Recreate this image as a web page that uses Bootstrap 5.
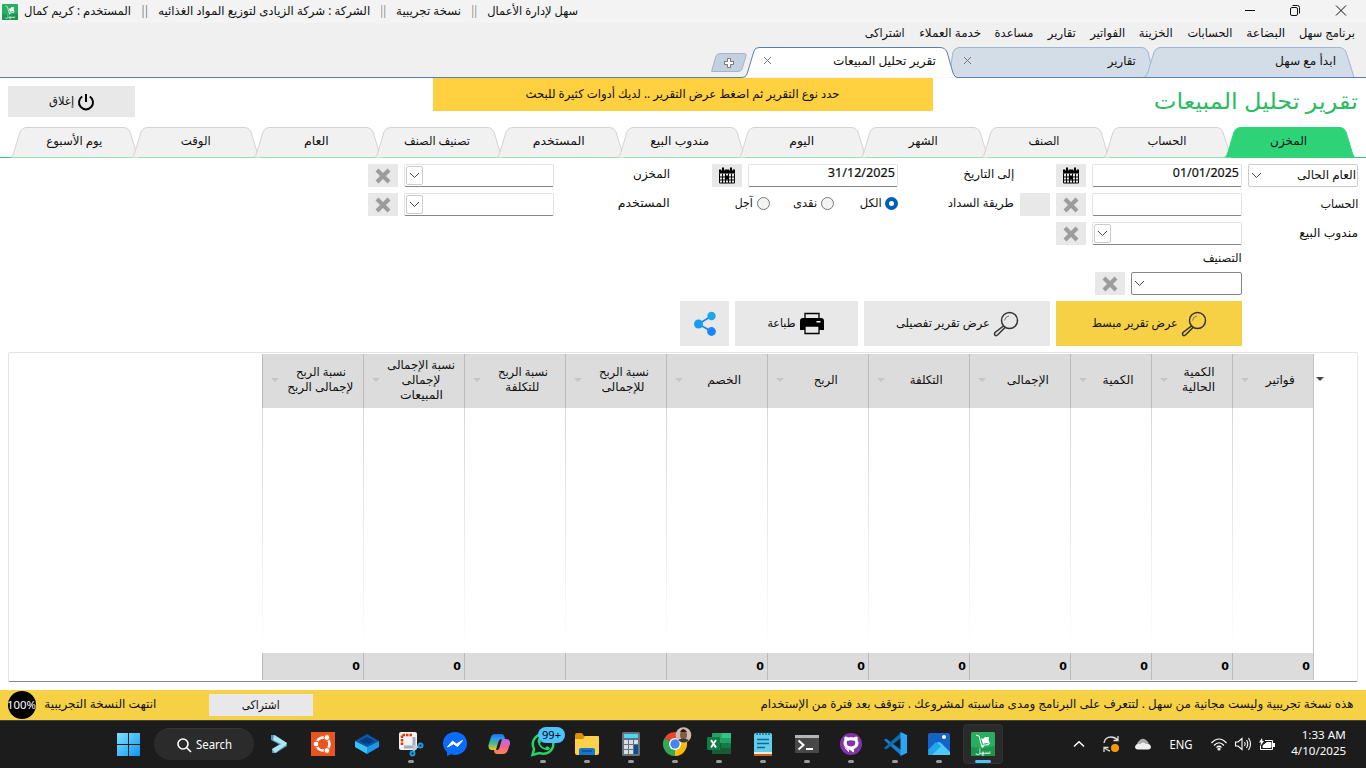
<!DOCTYPE html>
<html lang="ar">
<head>
<meta charset="utf-8">
<meta name="viewport" content="width=device-width, initial-scale=1">
<title>سهل لإدارة الأعمال</title>
<link rel="stylesheet" href="https://cdn.jsdelivr.net/npm/bootstrap@5.3.0/dist/css/bootstrap.min.css">
<script src="https://cdn.jsdelivr.net/npm/bootstrap@5.3.0/dist/js/bootstrap.bundle.min.js"></script>
<style>
body{width:1366px;height:768px;overflow:hidden;background:#fff;color:#111;font:12px/15px "Noto Sans","DejaVu Sans",sans-serif}
svg{display:block;overflow:visible;flex:none}
.rtl{direction:rtl}
.fit{display:inline-block;direction:rtl;white-space:nowrap;flex:none}
.fit>span{display:inline-block;transform-origin:100% 50%;--dy:-1px}
.fit.up>span{--dy:-2px}
.fit.level>span{--dy:0px}
.titlebar{height:23px;background:#f3f3f3;padding:0 20px 0 2px;gap:10px}
.menubar{height:24px;background:#f0f0f0;padding:0 11px 3px 0;gap:14px}
.strip{height:31px;background:#f0f0f0}
.strip .shape{position:absolute;left:0;top:0}
.strip .cells{position:relative;height:28px;padding-right:30px}
.pagehead{height:49px;padding:0 8px}
.banner{width:500px;height:33px;background:#ffd040;margin-left:298px}
.graybtn{background:#e8e8e8;border:0;border-radius:0;padding:0;color:#111;font-size:12px;line-height:15px;display:flex;align-items:center;justify-content:center}
.goldbtn{background:#f7d145}
.exit{width:127px;height:31px;margin-top:8px;gap:4px}
.heading{margin-left:221px;margin-top:8px;font-size:22px;line-height:30px;color:#2dbb64}
.rtabs{height:31px;border-bottom:1px solid #36cc78;padding-left:14px}
.rtab{width:121.4px;height:30px;position:relative;display:flex;justify-content:center;align-items:center}
.rtab svg{position:absolute;left:-3px;top:0}
.rtab .fit{position:relative;top:-1px}
.rtab.mid{padding-right:3px}
.rtab path{fill:#f1f1f1;stroke:#d3d3d3}
.rtab.on path{fill:#2fd377;stroke:#2fd377}
.filters{padding:6px 8px;gap:6px;height:194px}
.frow{height:23px;gap:6px}
.frow>*{flex:none}
.lab{width:110px}.lab2{width:146px;padding-right:36px}
.box{width:150px;height:23px;border:1px solid #e3e3e3;border-bottom-color:#868686;border-radius:2px;background:#fff;padding:0 3px}
.box .dt{margin-right:-1px;margin-top:1px;-webkit-text-stroke:.2px #111}
.drop{width:17px;height:19px;border:1px solid #ccc;border-radius:2px;margin-right:auto;margin-left:-2px;display:flex;align-items:center;justify-content:center}
.ico{width:30px;height:23px}
.radio{width:13px;height:13px;border:1px solid #777;border-radius:50%;background:#f3f3f3}
.radio.on{border:4px solid #0060b8;background:#fff}
.actions{gap:6px}
.actions .graybtn{height:45px;gap:4px}
.frame{margin:0 8px;height:330px;border:1px solid #e4e4e4;border-bottom-color:#888;border-radius:2px;padding-top:1px}
.cols{width:1052px;height:326px;margin-left:253px;border-right:1px solid #c2c2c2}
.colx{width:101px;display:flex;flex-direction:column;height:326px}
.colx.narrow{width:81px}
.hd{height:54px;background:#dcdcdc;border-left:1px solid #bbb;padding:0 1px 2px 8px}
.hd .caret,.pick{width:0;height:0;border:4px solid transparent;border-top-color:#c5c5c5;border-bottom:0;flex:none}
.bd{height:245px;background:linear-gradient(#d9d9d9,#e6e6e6 40%,#fff) left/1px 100% no-repeat}
.ft{height:27px;background:#dcdcdc;border-left:1px solid #bbb;text-align:right;padding-right:3px;font:bold 11px/27px "DejaVu Sans",sans-serif;color:#000}
.rest{width:44px}
.pick{border-top-color:#444;margin:23px 0 0 2px}
.trial{height:30px;background:#f7d145;margin-top:8px;padding:0 13px 0 8px}
.pct{width:28px;height:28px;border-radius:50%;background:#000;color:#fff;font-size:11px;overflow:hidden;justify-content:center}
.taskbar{height:48px;background:#1c1c1c;border-top:1px solid #444;color:#fff;padding-bottom:1px}
.pill{width:100px;height:32px;border-radius:16px;background:#2b2b2b;border-top:1px solid #363636;margin-left:14px;margin-right:13px}
.apps{gap:20px}
.app{width:24px;height:24px;position:relative}
.app.run::after{content:"";position:absolute;left:9px;top:28px;width:6px;height:3px;border-radius:2px;background:#9a9a9a}
.app.cur::before{content:"";position:absolute;left:-8px;top:-8px;width:40px;height:40px;border-radius:4px;background:#2a2a2a;border:1px solid #333}
.app.run.cur::after{left:4px;width:16px;background:#4cc2ff}
.app svg{position:relative}
.count{position:absolute;left:7px;top:-5px;width:27px;height:16px;border-radius:8px;background:#4cc2ff;color:#000;font-size:11px;line-height:15px;text-align:center;z-index:2}
.clock{text-align:right;font-size:11px;line-height:16px;width:60px}
</style>
</head>
<body>
<svg width="0" height="0" style="position:absolute"><defs>
<g id="x"><path d="M2 2L14 14M14 2L2 14" stroke="#9c9c9c" stroke-width="4.2"/></g>
<g id="v"><path d="M0 0L4.5 4.5L9 0" fill="none" stroke="#444"/></g>
<g id="cal" transform="translate(0 -.5)"><path d="M0 2H16V6H0ZM3 0h2v3H3ZM11 0h2v3h-2Z"/><path d="M.5 6V15.500H15.500V6M0 9.500H16M0 12.500H16M3.500 6V15.500M6.500 6V15.500M9.500 6V15.500M12.500 6V15.500" fill="none" stroke="#000"/><path d="M7 8h3v4H7Z"/><path d="M2.500 .5v2.500M5.500 .5v2.500M10.500 .5v2.500M13.500 .5v2.500" stroke="#ddd" stroke-width=".8"/></g>
<g id="mag" fill="none" stroke="#333" stroke-width="1.500"><circle cx="15.500" cy="8.500" r="8"/><path d="M9.500 14L11 15.500L3.500 23Q2 24.200 .8 23Q0 22 1 20.500Z"/><path d="M10.500 8.500Q11 4.500 15 4" stroke-width="1" stroke="#777"/></g>
<g id="sahl"><rect width="24" height="24" rx="1.500" fill="#27ae60"/><path d="M0 15Q12 17 24 14V24H0Z" fill="#1f9450"/><path d="M5 3L8 4L10.500 13.500L18 12.500" fill="none" stroke="#fff"/><path d="M10 6L12 7L14 5L18 5L17.500 8L19 12L15 11L12 12Z" fill="#fff"/><circle cx="11.500" cy="14.500" r="1.200" fill="#fff"/><text x="12" y="21.500" text-anchor="middle" font-size="7.500" fill="#d8f5e2">سهل</text></g>
</defs></svg>

<header class="titlebar d-flex align-items-center">
  <svg width="16" height="16" viewBox="0 0 24 24"><use href="#sahl"/></svg>
  <span class="fit" style="margin-left:-4px" data-w="107">المستخدم : كريم كمال</span>
  <span class="fit" data-w="7">||</span>
  <span class="fit" data-w="212">الشركة : شركة الزيادى لتوزيع المواد الغذائيه</span>
  <span class="fit" data-w="6">||</span>
  <span class="fit" data-w="65">نسخة تجريبية</span>
  <span class="fit" data-w="6">||</span>
  <span class="fit" data-w="91">سهل لإدارة الأعمال</span>
  <svg class="ms-auto" width="101" height="11" viewBox="0 0 101 11" fill="none" stroke="#111" style="margin-top:-2px"><path d="M0 5.500H10M91 .5L101 10.500M101 .5L91 10.500"/><rect x="45.500" y="2.500" width="7" height="8" rx="1.500"/><path d="M47.500 .5H52.500Q54.500 .5 54.500 2.500V8.500"/></svg>
</header>
<nav class="menubar d-flex align-items-center rtl">
  <span class="fit" data-w="56">برنامج سهل</span><span class="fit" data-w="39">البضاعة</span><span class="fit" data-w="45">الحسابات</span><span class="fit" data-w="34">الخزينة</span><span class="fit" data-w="35">الفواتير</span><span class="fit" data-w="28">تقارير</span><span class="fit" data-w="39">مساعدة</span><span class="fit" data-w="62">خدمة العملاء</span><span class="fit" data-w="40">اشتراكى</span>
</nav>
<div class="strip position-relative">
  <svg class="shape" width="1366" height="31" viewBox="0 0 1366 31">
    <path d="M949 30.500L953 5Q955 .5 959 .5H1141Q1146 .5 1148 5L1154 30" fill="#d2dde8" stroke="#9db7d2"/>
    <path d="M1144 30.500Q1147 29 1148 25L1154 5Q1156 .5 1160 .5H1339Q1344 .5 1346 5L1354 30" fill="#d2dde8" stroke="#9db7d2"/>
    <path d="M0 30.500H742Q746 30.500 747 27L754 4Q755 .5 759 .5H940Q945 .5 947 5L953 26Q955 30.500 957 30.500H1366" fill="#fff" stroke="#5b7fa8"/>
    <path d="M711.500 24.500L716 9Q717 6.500 720 6.500H744Q747 6.500 746 9L742 22Q741 24.500 738 24.500Z" fill="#c3d0dd" stroke="#9fb6cc"/>
    <path d="M727.500 11.500h3v3h3v3h-3v3h-3v-3h-3v-3h3Z" fill="#fff" stroke="#777"/>
    <path d="M764 10l7 7M771 10l-7 7M964 10l7 7M971 10l-7 7" stroke="#777"/>
  </svg>
  <div class="cells d-flex align-items-center rtl">
    <span class="fit" data-w="61">ابدأ مع سهل</span><span class="fit" style="margin-right:139px" data-w="28">تقارير</span><span class="fit" style="margin-right:172px" data-w="103">تقرير تحليل المبيعات</span>
  </div>
</div>

<div class="pagehead d-flex">
  <button class="graybtn exit" type="button"><span class="fit" data-w="25">إغلاق</span>
    <svg width="16" height="16" viewBox="0 0 16 16" fill="none" stroke="#000" stroke-width="2"><path d="M4.200 2.500A7 7 0 1 0 11.800 2.500M8 0V8"/></svg></button>
  <div class="banner d-flex align-items-center justify-content-center"><span class="fit" data-w="314">حدد نوع التقرير ثم اضغط عرض التقرير .. لديك أدوات كثيرة للبحث</span></div>
  <div class="heading"><span class="fit" data-w="204">تقرير تحليل المبيعات</span></div>
</div>

<nav class="rtabs d-flex" id="rtabs"></nav>

<section class="filters d-flex flex-column rtl">
  <div class="frow d-flex align-items-center">
    <div class="box d-flex align-items-center" style="width:110px;border-color:#ccc;padding-right:1px"><span class="fit" data-w="59">العام الحالى</span><svg class="me-auto" width="9" height="5"><use href="#v"/></svg></div>
    <div class="box"><span class="fit dt" data-w="66">01/01/2025</span></div>
    <button class="graybtn ico" type="button"><svg width="16" height="16"><use href="#cal"/></svg></button>
    <div class="ico"></div>
    <div class="lab"><span class="fit up" data-w="51">إلى التاريخ</span></div>
    <div class="box"><span class="fit dt" data-w="67">31/12/2025</span></div>
    <button class="graybtn ico" type="button"><svg width="16" height="16"><use href="#cal"/></svg></button>
    <div class="lab2"><span class="fit up" data-w="37">المخزن</span></div>
    <div class="box d-flex align-items-center"><span class="drop"><svg width="9" height="5"><use href="#v"/></svg></span></div>
    <button class="graybtn ico" type="button"><svg width="16" height="16"><use href="#x"/></svg></button>
  </div>
  <div class="frow d-flex align-items-center">
    <div class="lab"><span class="fit" data-w="38">الحساب</span></div>
    <div class="box"></div>
    <button class="graybtn ico" type="button"><svg width="16" height="16"><use href="#x"/></svg></button>
    <button class="graybtn ico" type="button"></button>
    <div class="lab"><span class="fit up" data-w="66">طريقة السداد</span></div>
    <div class="d-flex align-items-center" style="width:186px;margin-top:-2px"><i class="radio on"></i><span class="fit" style="margin-right:3px" data-w="22">الكل</span><i class="radio" style="margin-right:26px"></i><span class="fit" style="margin-right:4px" data-w="24">نقدى</span><i class="radio" style="margin-right:23px"></i><span class="fit" style="margin-right:4px" data-w="18">آجل</span></div>
    <div class="lab2"><span class="fit up" data-w="52">المستخدم</span></div>
    <div class="box d-flex align-items-center"><span class="drop"><svg width="9" height="5"><use href="#v"/></svg></span></div>
    <button class="graybtn ico" type="button"><svg width="16" height="16"><use href="#x"/></svg></button>
  </div>
  <div class="frow d-flex align-items-center">
    <div class="lab"><span class="fit" data-w="59">مندوب البيع</span></div>
    <div class="box d-flex align-items-center"><span class="drop"><svg width="9" height="5"><use href="#v"/></svg></span></div>
    <button class="graybtn ico" type="button"><svg width="16" height="16"><use href="#x"/></svg></button>
  </div>
  <div style="height:15px;padding-right:116px"><span class="fit" data-w="39">التصنيف</span></div>
  <div class="frow d-flex align-items-center" style="padding-right:116px">
    <div class="box d-flex align-items-center" style="width:111px;border-color:#868686"><svg class="me-auto" width="9" height="5"><use href="#v"/></svg></div>
    <button class="graybtn ico" type="button"><svg width="16" height="16"><use href="#x"/></svg></button>
  </div>
  <div class="actions d-flex" style="padding-right:116px">
    <button class="graybtn goldbtn" style="width:186px" type="button"><svg width="24" height="24"><use href="#mag"/></svg><span class="fit" data-w="86">عرض تقرير مبسط</span></button>
    <button class="graybtn" style="width:186px;padding-left:2px;padding-right:3px" type="button"><svg width="24" height="24"><use href="#mag"/></svg><span class="fit" data-w="94">عرض تقرير تفصيلى</span></button>
    <button class="graybtn" style="width:123px;padding-right:2px" type="button"><svg width="24" height="24" viewBox="0 0 24 24"><path d="M3 6H21Q24 6 24 9V18H0V9Q0 6 3 6Z"/><path d="M5 6V1.500H19V6M5 14V21.500H19V14Z" fill="#e8e8e8" stroke="#000" stroke-width="1.300"/><rect x="16.500" y="9" width="4" height="1.500" fill="#fff"/></svg><span class="fit" data-w="28">طباعة</span></button>
    <button class="graybtn" style="width:49px" type="button"><svg width="22" height="24" viewBox="0 0 22 24"><path d="M17.500 4L4.500 12L17.500 19.500" fill="none" stroke="#1a7df0" stroke-width="1.500"/><circle cx="17.500" cy="4" r="4.200" fill="#1ca8e8"/><circle cx="4.500" cy="12" r="4.500" fill="#1b9cf2"/><circle cx="17.500" cy="19.500" r="4.400" fill="#1a85ff"/></svg></button>
  </div>
</section>

<main class="frame d-flex">
  <div class="cols d-flex" id="cols"></div>
  <div class="rest"><div class="pick"></div></div>
</main>

<div class="trial d-flex align-items-center">
  <div class="pct d-flex align-items-center"><span class="fit" data-w="29">100%</span></div>
  <span class="fit up" style="margin-left:8px" data-w="112">انتهت النسخة التجريبية</span>
  <button class="graybtn" style="width:104px;height:22px;margin-left:53px" type="button"><span class="fit" data-w="38">اشتراكى</span></button>
  <span class="fit up ms-auto" data-w="593">هذه نسخة تجريبية وليست مجانية من سهل . لتتعرف على البرنامج ومدى مناسبته لمشروعك . تتوقف بعد فترة من الإستخدام</span>
</div>

<footer class="taskbar d-flex align-items-center">
  <svg style="margin-left:117px" width="23" height="23" viewBox="0 0 23 23"><defs><linearGradient id="w" x2="1" y2="1"><stop stop-color="#7de3fb"/><stop offset="1" stop-color="#1095f5"/></linearGradient></defs><path d="M0 0H11V11H0ZM12 0H23V11H12ZM0 12H11V23H0ZM12 12H23V23H12Z" fill="url(#w)"/></svg>
  <div class="pill d-flex align-items-center"><svg style="margin-left:23px" width="14" height="14" fill="none" stroke="#fff" stroke-width="1.600"><circle cx="6" cy="6" r="5"/><path d="M9.500 9.500L14 14"/></svg><span class="fit level" style="margin-left:5px" data-w="36">Search</span></div>
  <div class="apps d-flex">
    <div class="app"><svg width="24" height="24"><path d="M4 3L8 3L20 11V14L9 21H5V17L12 12.500L4 8Z" fill="#5d91aa"/><path d="M7 3L20 11L18 14L6 8ZM5 17L14 12L19 13L8 21Z" fill="#a9e6f2"/></svg></div>
    <div class="app"><svg width="24" height="24"><rect width="24" height="24" fill="#e95420"/><circle cx="12" cy="12" r="6.500" fill="none" stroke="#fff" stroke-width="2.500"/><g fill="#fff" stroke="#e95420"><circle cx="16" cy="5.500" r="2.900"/><circle cx="5" cy="12" r="2.900"/><circle cx="16" cy="18.500" r="2.900"/></g></svg></div>
    <div class="app"><svg width="24" height="24"><path d="M0 9L12 2L24 9L12 15Z" fill="#0b58a8"/><path d="M4 9L12 5L20 9L12 13Z" fill="#063a80"/><path d="M0 9L12 15V22L0 15Z" fill="#35c3fb"/><path d="M24 9L12 15V22L24 15Z" fill="#1b96e8"/></svg></div>
    <div class="app run"><svg width="24" height="24"><rect width="18" height="18" rx="2" fill="#f1f1f1"/><path d="M3 13V3H14" fill="none" stroke="#d83b01" stroke-width="2.500" stroke-dasharray="2.500 1"/><path d="M15 5V15H5" fill="none" stroke="#aab" stroke-width="3"/><path d="M15 13V19M15 15H20" stroke="#bcd" stroke-width="2"/><g fill="none" stroke="#1a9be0" stroke-width="2"><circle cx="13.500" cy="21.500" r="2"/><circle cx="21.500" cy="13.500" r="2"/></g></svg></div>
    <div class="app"><svg width="24" height="24"><path d="M12 0C5 0 0 5 0 11.500C0 15 1.500 18 4 20V24L8 22.300C16 25 24 19.500 24 11.500C24 5 19 0 12 0Z" fill="#0a6cff"/><path d="M4.500 15L9.500 9L13.500 12L19.500 8.500L14.500 14.500L10.500 11.800Z" fill="#fff" stroke="#fff"/></svg></div>
    <div class="app"><svg width="24" height="24"><defs><linearGradient id="c1" x2="0" y2="1"><stop stop-color="#1f6fe0"/><stop offset=".3" stop-color="#2a9af0"/><stop offset=".6" stop-color="#4dbb84"/><stop offset="1" stop-color="#f0c520"/></linearGradient><linearGradient id="c2" x2="0" y2="1"><stop stop-color="#b36bf0"/><stop offset=".5" stop-color="#f0629a"/><stop offset="1" stop-color="#f98848"/></linearGradient></defs><path d="M8 2H15Q17 2 18 7H15Q12 7 11 11L9 18H5Q1 18 1.500 13L4 5Q5 2 8 2Z" fill="url(#c1)"/><path d="M16 22H10Q7 22 7 18H10Q12 18 13 14L15 7H19Q23.500 7 23 12L20.500 19Q19 22 16 22Z" fill="url(#c2)"/></svg></div>
    <div class="app run"><svg width="24" height="24"><path d="M1.500 23L3 17Q0 11 4 6Q9 0 17 3Q24 7 22 15Q18 24 8 21Z" fill="none" stroke="#25d366" stroke-width="2.500"/><path d="M8 6L10 10L9 12Q11 15 14 16L16 14L19 16Q18 19 15 18Q8 17 6.500 9Q6.500 7 8 6Z" fill="#25d366"/></svg><span class="count">99+</span></div>
    <div class="app run"><svg width="24" height="24"><path d="M0 3Q0 1 2 1H7L9 4H24V8H0Z" fill="#d99100"/><path d="M0 7H8L10 4H22Q24 4 24 6V21Q24 23 22 23H2Q0 23 0 21Z" fill="#ffd04c"/><path d="M4 23V18Q4 16 6 16H18Q20 16 20 18V23Z" fill="#1478c8"/><path d="M7 19H17" stroke="#0a4f93" stroke-width="1.500"/></svg></div>
    <div class="app run"><svg width="24" height="24"><rect x="3" width="18" height="24" rx="1.500" fill="#65717c"/><rect x="5" y="2" width="14" height="4" fill="#4ed4f5"/><path d="M5 8h4v4H5zM10 8h4v4h-4zM15 8h4v4h-4zM5 13h4v4H5zM10 13h4v4h-4zM5 18h4v4H5zM10 18h4v4h-4z" fill="#d7dde2"/><path d="M15 13h4v9h-4z" fill="#0c4f8c"/></svg></div>
    <div class="app run"><svg width="24" height="24"><path d="M12 12L1.600 6A12 12 0 0 1 22.400 6Z" fill="#ea4335"/><path d="M12 12L22.400 6A12 12 0 0 1 12 24Z" fill="#fbbc04"/><path d="M12 12L12 24A12 12 0 0 1 1.600 6Z" fill="#34a853"/><circle cx="12" cy="12" r="6" fill="#fff"/><circle cx="12" cy="12" r="4.700" fill="#4285f4"/><circle cx="20.500" cy="3" r="7.800" fill="#cdbcae"/><ellipse cx="20.500" cy="3" rx="3.500" ry="5" fill="#835a43"/><path d="M17 0Q20-6 24 0Z" fill="#241a17"/><path d="M15 8Q20 5 26 8Q21 13 15 8Z" fill="#33363b"/></svg></div>
    <div class="app run"><svg width="24" height="24"><rect x="5" y="1" width="19" height="21" rx="1" fill="#21a366"/><path d="M14.500 1H24V6H14.500Z" fill="#33c481"/><path d="M5 11H14V22H5ZM14 16H24V22H14Z" fill="#185c37"/><path d="M14 11H24V16H14Z" fill="#107c41"/><rect y="5" width="13" height="13" rx="1" fill="#107c41"/><path d="M4 8L9 15.500M9 8L4 15.500" stroke="#fff" stroke-width="1.900"/></svg></div>
    <div class="app run"><svg width="24" height="24"><rect x="3" y="1" width="18" height="23" rx="1.500" fill="#63cdeb"/><path d="M3 20H21V22H3Z" fill="#f5e9dc"/><path d="M3 22H21V24H3Z" fill="#c8621b"/><path d="M6 7.500H18M6 11.500H18M6 15.500H14" stroke="#096a96" stroke-width="1.500"/><path d="M6 0V3M9 0V3M12 0V3M15 0V3M18 0V3" stroke="#0c5372" stroke-width="1.200"/></svg></div>
    <div class="app run"><svg width="24" height="24"><rect y="3" width="24" height="18" rx="1" fill="#484848"/><path d="M0 3H24V6H0Z" fill="#b5b5b5"/><path d="M3.500 8.500L8.500 13L3.500 17.500M11 17H18" fill="none" stroke="#fff" stroke-width="2"/></svg></div>
    <div class="app run"><svg width="24" height="24"><circle cx="12" cy="12" r="11" fill="#8534a8"/><path d="M9.500 20V17.500Q7 18 6 15.500M9.500 16.500Q5 15.500 5 11Q5 9.500 6 8Q5.500 6.500 6 5Q8 5 9 6Q12 5.300 15 6Q16 5 18 5Q18.500 6.500 18 8Q19 9.500 19 11Q19 15.500 14.500 16.500V20Z" fill="#fff" stroke="#fff"/><path d="M8 9Q12 7.500 16 9Q17.500 14 12 14.500Q6.500 14 8 9Z" fill="#8534a8"/></svg></div>
    <div class="app run"><svg width="24" height="24"><path d="M1 8L3 6.500L18 18V23.500Z" fill="#1482c8"/><path d="M1 16L3 17.500L18 6V.5Z" fill="#0d6bb0"/><path d="M17.500 0L24 3V21L17.500 24Z" fill="#2ba5f5"/></svg></div>
    <div class="app run"><svg width="24" height="24"><rect x="1" y="1" width="22" height="22" rx="2" fill="#1464c8"/><path d="M1 22L10 11Q12 9 14 11L23 20V23H2Z" fill="#4cc9f8"/><path d="M1 18L9 10L14 14L5 23H2Z" fill="#20a6ea"/><circle cx="17" cy="5" r="2" fill="#fff"/></svg></div>
    <div class="app run cur"><svg width="24" height="24"><use href="#sahl"/></svg></div>
  </div>
  <svg style="margin-left:79px" width="10" height="6" fill="none" stroke="#fff" stroke-width="1.500"><path d="M0 5.500L5 .7L10 5.500"/></svg>
  <svg style="margin-left:19px" width="16" height="16" fill="none" stroke="#ddd" stroke-width="1.300"><path d="M1 7Q2 1 8 1Q12 1 14.500 4M15 0V4.500H10.500M7 15Q3 14 1.500 11.500M1 16V11.500H5.500"/><circle cx="12" cy="12" r="4" fill="#ff9800" stroke="none"/></svg>
  <svg style="margin-left:16px" width="16" height="12"><path d="M3 8Q1 5 4 3Q7-1 11 2L14 5L8 10Z" fill="#aaa"/><path d="M3 11.500Q0 11.500 0 8.500Q1 5 5 6Q8 3 11 6Q15 5 16 8.500Q16 11.500 13 11.500Z" fill="#eee"/></svg>
  <span class="fit level" style="margin-left:19px" data-w="23">ENG</span>
  <svg style="margin-left:18px" width="16" height="13" fill="none" stroke="#fff" stroke-width="1.200"><path d="M.5 5Q8-3 15.500 5M3 7.500Q8 2 13 7.500M5.500 9.500Q8 7 10.500 9.500"/><circle cx="8" cy="11" r="1"/></svg>
  <svg style="margin-left:8px" width="16" height="14" fill="none" stroke="#fff" stroke-width="1.100"><path d="M.5 5V9H3L7 12.500V1.500L3 5ZM9.500 5Q11 7 9.500 9M11.500 3Q14 7 11.500 11M13.500 1Q17.500 7 13.500 13"/></svg>
  <svg style="margin-left:8px" width="16" height="13" fill="none" stroke="#fff"><path d="M6 2.500H13.500V11.500H1.500V7.500"/><path d="M8 4.500H12V9.500H4V7.500Z" fill="#fff"/><path d="M15 5V9" stroke-width="2"/><path d="M3 0L0 4.500H2L1.500 8L5 3H3.500Z" fill="#fff" stroke="none"/></svg>
  <div class="clock" style="margin-left:11px"><span class="fit lat" data-w="44">1:33 AM</span><br><span class="fit" data-w="55">4/10/2025</span></div>
</footer>

<script>
const tabs=[["يوم الأسبوع",56],["الوقت",30],["العام",25],["تصنيف الصنف",66],["المستخدم",52],["مندوب البيع",59],["اليوم",25],["الشهر",29],["الصنف",31],["الحساب",39],["المخزن",37]];
document.getElementById("rtabs").innerHTML=tabs.map(([t,w],i)=>
`<div class="rtab${i==10?" on":i>1&&i<9?" mid":""}"><svg width="131" height="31"><path d="M0 30.500Q2 29 3 25L9 5Q11 .5 16 .5H${i==10?115:112}Q${i==10?119:117} .5 ${i==10?121:119} 5L${i==10?128:126} 28L${i==10?130:127} 30.500"/></svg><span class="fit" data-w="${w}">${t}</span></div>`).join("");
const cols=[[[["نسبة الربح",50],["لإجمالى الربح",66]],"0"],[[["نسبة الإجمالى",68],["لإجمالى",39],["المبيعات",43]],"0"],[[["نسبة الربح",50],["للتكلفة",34]],""],[[["نسبة الربح",50],["للإجمالى",43]],""],[[["الخصم",34]],"0"],[[["الربح",24]],"0"],[[["التكلفة",33]],"0"],[[["الإجمالى",42]],"0"],[[["الكمية",31]],"0"],[[["الكمية",31],["الحالية",33]],"0"],[[["فواتير",29]],"0"]];
document.getElementById("cols").innerHTML=cols.map(([h,z],i)=>
`<div class="colx${i>7?" narrow":""}"><div class="hd d-flex align-items-center"><i class="caret"></i><div class="flex-fill text-center">${h.map(([t,w])=>`<div><span class="fit" data-w="${w}">${t}</span></div>`).join("")}</div></div><div class="bd"></div><div class="ft">${z}</div></div>`).join("");
/* squeeze each label to the width reserved for it */
document.querySelectorAll(".fit").forEach(e=>{
  const s=document.createElement("span");
  s.textContent=e.textContent;
  if(e.classList.contains("lat"))s.dir="ltr";
  e.textContent="";e.append(s);
  const n=s.getBoundingClientRect().width,w=+e.dataset.w;
  e.style.width=w+"px";
  s.style.transform=`translateY(var(--dy)) scaleX(${w/n})`;
});
</script>
</body>
</html>
